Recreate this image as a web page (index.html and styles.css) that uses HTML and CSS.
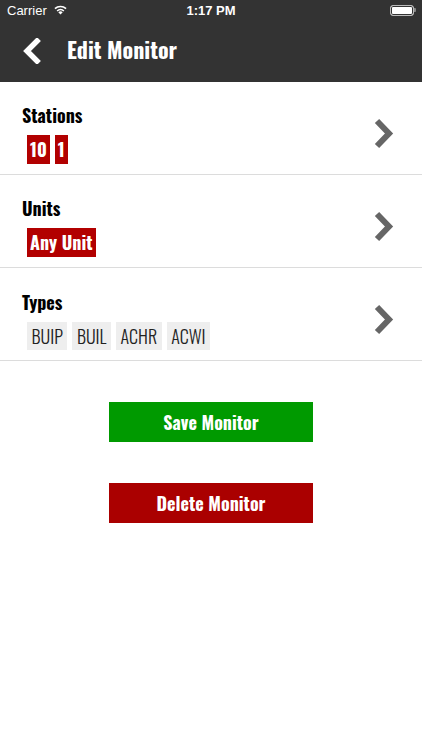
FILE: index.html
```html
<!DOCTYPE html>
<html>
<head>
<meta charset="utf-8">
<link rel="stylesheet" href="styles.css">
</head>
<body>
<div class="app">
  <header class="top">
    <div class="statusbar">
      <div class="sb-left">
        <span class="carrier">Carrier</span>
        <svg class="wifi" width="15" height="11" viewBox="0 0 15 11">
          <path d="M7.5 10.6 L5.3 8.2 A3.2 3.2 0 0 1 9.7 8.2 Z" fill="#fff"/>
          <path d="M3.6 6.4 A5.6 5.6 0 0 1 11.4 6.4 L10.3 7.5 A4.1 4.1 0 0 0 4.7 7.5 Z" fill="#fff"/>
          <path d="M1.4 4.1 A8.8 8.8 0 0 1 13.6 4.1 L12.5 5.3 A7.2 7.2 0 0 0 2.5 5.3 Z" fill="#fff"/>
        </svg>
      </div>
      <span class="time">1:17 PM</span>
      <div class="battery"><div class="battery-fill"></div><div class="battery-tip"></div></div>
    </div>
    <div class="navbar">
      <svg class="back" width="20" height="26" viewBox="0 0 20 26">
        <path d="M15 3 L5 13 L15 23" fill="none" stroke="#fff" stroke-width="5.5" stroke-linecap="square" stroke-linejoin="miter"/>
      </svg>
      <h1 class="title">Edit Monitor</h1>
    </div>
  </header>

  <main class="list">
    <div class="row">
      <div class="row-body">
        <div class="label">Stations</div>
        <div class="tags">
          <span class="tag tag-red">10</span>
          <span class="tag tag-red">1</span>
        </div>
      </div>
      <svg class="chev" width="22" height="31" viewBox="0 0 22 31">
        <path d="M4 3 L16 15.5 L4 28" fill="none" stroke="#666" stroke-width="6"/>
      </svg>
    </div>
    <div class="row">
      <div class="row-body">
        <div class="label">Units</div>
        <div class="tags">
          <span class="tag tag-red">Any Unit</span>
        </div>
      </div>
      <svg class="chev" width="22" height="31" viewBox="0 0 22 31">
        <path d="M4 3 L16 15.5 L4 28" fill="none" stroke="#666" stroke-width="6"/>
      </svg>
    </div>
    <div class="row">
      <div class="row-body">
        <div class="label">Types</div>
        <div class="tags">
          <span class="tag tag-grey">BUIP</span>
          <span class="tag tag-grey">BUIL</span>
          <span class="tag tag-grey">ACHR</span>
          <span class="tag tag-grey">ACWI</span>
        </div>
      </div>
      <svg class="chev" width="22" height="31" viewBox="0 0 22 31">
        <path d="M4 3 L16 15.5 L4 28" fill="none" stroke="#666" stroke-width="6"/>
      </svg>
    </div>
  </main>

  <div class="actions">
    <button class="btn btn-save">Save Monitor</button>
    <button class="btn btn-delete">Delete Monitor</button>
  </div>
</div>
</body>
</html>
```

FILE: styles.css
```css
* { box-sizing: border-box; }
html, body { margin: 0; padding: 0; background: #fff; }
body { width: 422px; height: 750px; overflow: hidden; }

.app {
  font-family: "Oswald", "Open Sans", sans-serif;
  font-stretch: condensed;
}

.top { background: #333333; color: #fff; }

.statusbar {
  height: 20px;
  display: flex;
  align-items: center;
  justify-content: space-between;
  padding: 0 6px 0 7px;
  font-family: "Liberation Sans", Arial, sans-serif;
  font-stretch: normal;
  font-size: 13px;
  position: relative;
}
.sb-left { display: flex; align-items: center; gap: 6px; }
.wifi { display: block; margin-top: -1px; }
.time {
  position: absolute;
  left: 0; right: 0;
  text-align: center;
  font-weight: bold;
  pointer-events: none;
}
.battery { display: flex; align-items: center; }
.battery-fill {
  width: 24px; height: 11px;
  border: 1px solid #bbb;
  border-radius: 3px;
  background: #fff;
  box-shadow: inset 0 0 0 1px #333;
}
.battery-tip { width: 2px; height: 4px; background: #888; border-radius: 0 1px 1px 0; }

.navbar {
  height: 62px;
  display: flex;
  align-items: center;
  padding: 0 0 4px 22px;
  gap: 25px;
}
.back { display: block; margin-top: 3px; }
.title {
  margin: 0;
  font-size: 22px;
  font-weight: 700;
  line-height: 30px;
}

.row {
  display: flex;
  align-items: center;
  justify-content: space-between;
  padding: 20px 27px 10px 22px;
  border-bottom: 1px solid #dcdcdc;
  height: 93px;
}
.row-body { display: flex; flex-direction: column; }
.label {
  font-size: 18px;
  font-weight: 700;
  line-height: 26px;
  color: #000;
}
.tags { display: flex; gap: 5px; margin-top: 7px; padding-left: 5px; }
.tag {
  height: 29px;
  line-height: 29px;
  font-size: 18px;
  padding: 0 3px;
}
.tag-red { background: #b20000; color: #fff; font-weight: 700; }
.tag-grey { background: #eeeeee; color: #222; font-weight: 300; padding: 0 4.5px; height: 28px; line-height: 28px; }
.chev { display: block; }

.actions {
  display: flex;
  flex-direction: column;
  align-items: center;
  gap: 41px;
  padding-top: 41px;
}
.btn {
  width: 204px;
  height: 40px;
  border: none;
  color: #fff;
  font-family: "Oswald", "Open Sans", sans-serif;
  font-stretch: condensed;
  font-size: 18px;
  font-weight: 700;
  padding: 0;
}
.btn-save { background: #009a00; }
.btn-delete { background: #aa0000; }
```
